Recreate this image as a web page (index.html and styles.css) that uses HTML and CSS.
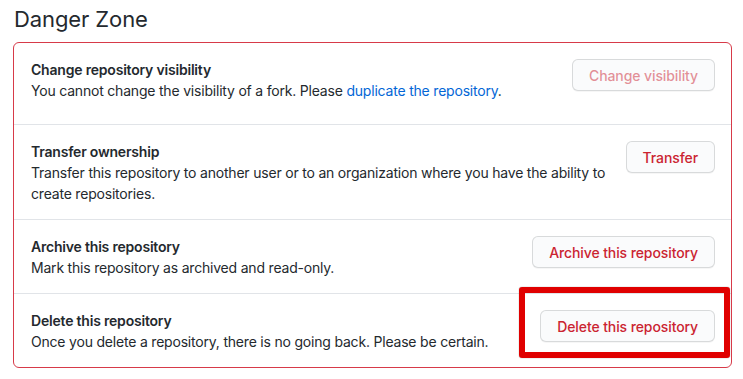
FILE: index.html
```html
<!DOCTYPE html>
<html lang="en">
<head>
  <meta charset="UTF-8" />
  <title>Danger Zone</title>
  <link rel="stylesheet" href="styles.css">
</head>
<body>
  <div class="settings">
    <h2 class="subhead">Danger Zone</h2>

    <div class="danger-box">
      <div class="box-row box-row--first">
        <div class="row-text">
          <strong>Change repository visibility</strong>
          <p>You cannot change the visibility of a fork. Please <a href="#">duplicate the repository</a>.</p>
        </div>
        <button class="btn-danger" disabled>Change visibility</button>
      </div>

      <div class="box-row">
        <div class="row-text">
          <strong>Transfer ownership</strong>
          <p>Transfer this repository to another user or to an organization where you have the ability to create repositories.</p>
        </div>
        <button class="btn-danger">Transfer</button>
      </div>

      <div class="box-row">
        <div class="row-text">
          <strong>Archive this repository</strong>
          <p>Mark this repository as archived and read-only.</p>
        </div>
        <button class="btn-danger">Archive this repository</button>
      </div>

      <div class="box-row">
        <div class="row-text">
          <strong>Delete this repository</strong>
          <p>Once you delete a repository, there is no going back. Please be certain.</p>
        </div>
        <div class="btn-wrap">
          <button class="btn-danger">Delete this repository</button>
          <span class="highlight"></span>
        </div>
      </div>
    </div>
  </div>
</body>
</html>
```

FILE: styles.css
```css
:root {
  --text-dark: #24292e;
  --danger: #cb2431;
  --danger-border: #d73a49;
  --row-border: #e1e4e8;
  --link: #0366d6;
}

* {
  box-sizing: border-box;
  margin: 0;
  padding: 0;
}

body {
  background: #fff;
  color: var(--text-dark);
  font-family: Inter, "Liberation Sans", sans-serif;
  font-size: 14px;
  line-height: 21px;
}

.settings {
  padding: 6px 11px 0 13px;
}

.subhead {
  font-size: 22px;
  font-weight: 400;
  line-height: 26px;
  letter-spacing: -0.1px;
  margin-bottom: 10px;
  padding-left: 1px;
}

.danger-box {
  border: 1px solid var(--danger-border);
  border-radius: 6px;
}

.box-row {
  display: flex;
  justify-content: space-between;
  align-items: flex-start;
  gap: 16px;
  padding: 16px 16px 15px 17px;
  border-top: 1px solid var(--row-border);
}
.box-row--first {
  border-top: 0;
  padding-bottom: 23px;
}

.row-text {
  letter-spacing: -0.2px;
}
.row-text strong {
  display: block;
  font-weight: 600;
  letter-spacing: -0.2px;
}
.row-text a {
  color: var(--link);
  text-decoration: none;
}

.btn-danger {
  flex-shrink: 0;
  height: 32px;
  padding: 0 16px;
  font-family: inherit;
  font-size: 14px;
  font-weight: 500;
  letter-spacing: -0.1px;
  color: var(--danger);
  background: #fafbfc;
  border: 1px solid rgba(27, 31, 35, 0.15);
  border-radius: 6px;
  box-shadow: 0 1px 0 rgba(27, 31, 35, 0.04);
  cursor: pointer;
}
.btn-danger:disabled {
  color: rgba(203, 36, 49, 0.5);
  cursor: default;
}

.btn-wrap {
  position: relative;
  flex-shrink: 0;
}
.btn-wrap .btn-danger {
  display: block;
}

/* annotation drawn over the delete button */
.highlight {
  position: absolute;
  left: -21px;
  right: -15px;
  top: -23px;
  bottom: -16px;
  border: 6px solid #e00000;
  border-radius: 3px;
  box-shadow: 0 0 1px rgba(0, 0, 0, 0.6);
  pointer-events: none;
}
```
